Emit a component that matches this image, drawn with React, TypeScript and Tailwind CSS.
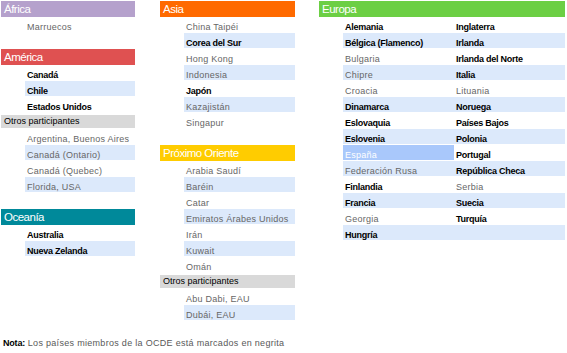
type Item = { name: string; bold?: boolean; hl?: boolean; spain?: boolean };
type Block =
  | { kind: "head"; label: string; color: string }
  | { kind: "other" }
  | { kind: "blank" }
  | { kind: "row"; item: Item };

const head = (label: string, color: string): Block => ({ kind: "head", label, color });
const row = (name: string, bold = false, hl = false): Block => ({ kind: "row", item: { name, bold, hl } });

const left: Block[] = [
  head("África", "bg-[#b5a1cc]"),
  row("Marruecos"),
  { kind: "blank" },
  head("América", "bg-[#df5151]"),
  row("Canadá", true),
  row("Chile", true, true),
  row("Estados Unidos", true),
  { kind: "other" },
  row("Argentina, Buenos Aires"),
  row("Canadá (Ontario)", false, true),
  row("Canadá (Quebec)"),
  row("Florida, USA", false, true),
  { kind: "blank" },
  head("Oceanía", "bg-[#00899a]"),
  row("Australia", true),
  row("Nueva Zelanda", true, true),
];

const middle: Block[] = [
  head("Asia", "bg-[#ff6a00]"),
  row("China Taipéi"),
  row("Corea del Sur", true, true),
  row("Hong Kong"),
  row("Indonesia", false, true),
  row("Japón", true),
  row("Kazajistán", false, true),
  row("Singapur"),
  { kind: "blank" },
  head("Próximo Oriente", "bg-[#ffcc00]"),
  row("Arabia Saudí"),
  row("Baréin", false, true),
  row("Catar"),
  row("Emiratos Árabes Unidos", false, true),
  row("Irán"),
  row("Kuwait", false, true),
  row("Omán"),
  { kind: "other" },
  row("Abu Dabi, EAU"),
  row("Dubái, EAU", false, true),
];

// Europa: two columns side by side, banding shared by row
const europa: [Item, Item][] = [
  [{ name: "Alemania", bold: true }, { name: "Inglaterra", bold: true }],
  [{ name: "Bélgica (Flamenco)", bold: true }, { name: "Irlanda", bold: true }],
  [{ name: "Bulgaria" }, { name: "Irlanda del Norte", bold: true }],
  [{ name: "Chipre" }, { name: "Italia", bold: true }],
  [{ name: "Croacia" }, { name: "Lituania" }],
  [{ name: "Dinamarca", bold: true }, { name: "Noruega", bold: true }],
  [{ name: "Eslovaquia", bold: true }, { name: "Países Bajos", bold: true }],
  [{ name: "Eslovenia", bold: true }, { name: "Polonia", bold: true }],
  [{ name: "España", spain: true }, { name: "Portugal", bold: true }],
  [{ name: "Federación Rusa" }, { name: "República Checa", bold: true }],
  [{ name: "Finlandia", bold: true }, { name: "Serbia" }],
  [{ name: "Francia", bold: true }, { name: "Suecia", bold: true }],
  [{ name: "Georgia" }, { name: "Turquía", bold: true }],
  [{ name: "Hungría", bold: true }, { name: "" }],
];

function Text({ item }: { item: Item }) {
  if (item.spain) return <span className="pl-[2px] text-[9px] tracking-[0.25px] text-white">{item.name}</span>;
  return item.bold ? (
    <span className="pl-[2px] text-[9px] font-bold tracking-[-0.25px] text-black">{item.name}</span>
  ) : (
    <span className="pl-[2px] text-[9px] tracking-[0.25px] text-[#666666]">{item.name}</span>
  );
}

function Column({ blocks, width }: { blocks: Block[]; width: string }) {
  return (
    <div className={`flex flex-col ${width}`}>
      {blocks.map((b, i) => {
        if (b.kind === "head")
          return (
            <div key={i} className={`h-4 pl-[3px] text-[11.5px] leading-4 tracking-[-0.5px] text-white ${b.color}`}>
              {b.label}
            </div>
          );
        if (b.kind === "blank") return <div key={i} className="h-4" />;
        if (b.kind === "other")
          return (
            <div key={i} className="flex h-4 items-center">
              <div className="h-[13px] w-full bg-[#d9d9d9] pl-[3px] text-[9px] leading-[13px] text-black">Otros participantes</div>
            </div>
          );
        return (
          <div key={i} className="h-4 pl-6">
            <div className={`h-[15px] leading-[15px] ${b.item.hl ? "bg-[#dce9fb]" : ""}`}>
              <Text item={b.item} />
            </div>
          </div>
        );
      })}
    </div>
  );
}

export default function App() {
  return (
    <div className="w-[567px] h-[353px] bg-white pl-px pt-px" style={{ fontFamily: '"Liberation Sans", Arial, sans-serif' }}>
      <div className="flex">
        <Column blocks={left} width="w-[134px]" />
        <div className="ml-[25px]">
          <Column blocks={middle} width="w-[135px]" />
        </div>
        <div className="ml-6 flex w-[246px] flex-col">
          <div className="h-4 bg-[#6ccf44] pl-[3px] text-[11.5px] leading-4 tracking-[-0.5px] text-white">Europa</div>
          {europa.map(([a, b], i) => {
            const hl = i % 2 === 1;
            return (
              <div key={i} className="flex h-4 pl-6">
                <div className={`h-[15px] w-[111px] leading-[15px] ${a.spain ? "bg-[#a9c8fb]" : hl ? "bg-[#dce9fb]" : ""}`}>
                  <Text item={a} />
                </div>
                <div className={`h-[15px] w-[111px] leading-[15px] ${hl ? "bg-[#dce9fb]" : ""}`}>
                  <Text item={b} />
                </div>
              </div>
            );
          })}
        </div>
      </div>
      <p className="mt-[14px] pl-[2px] text-[9px] leading-4 tracking-[0.3px] text-[#595959]">
        <span className="font-bold tracking-[-0.2px] text-black">Nota:</span> Los países miembros de la OCDE está marcados en negrita
      </p>
    </div>
  );
}
